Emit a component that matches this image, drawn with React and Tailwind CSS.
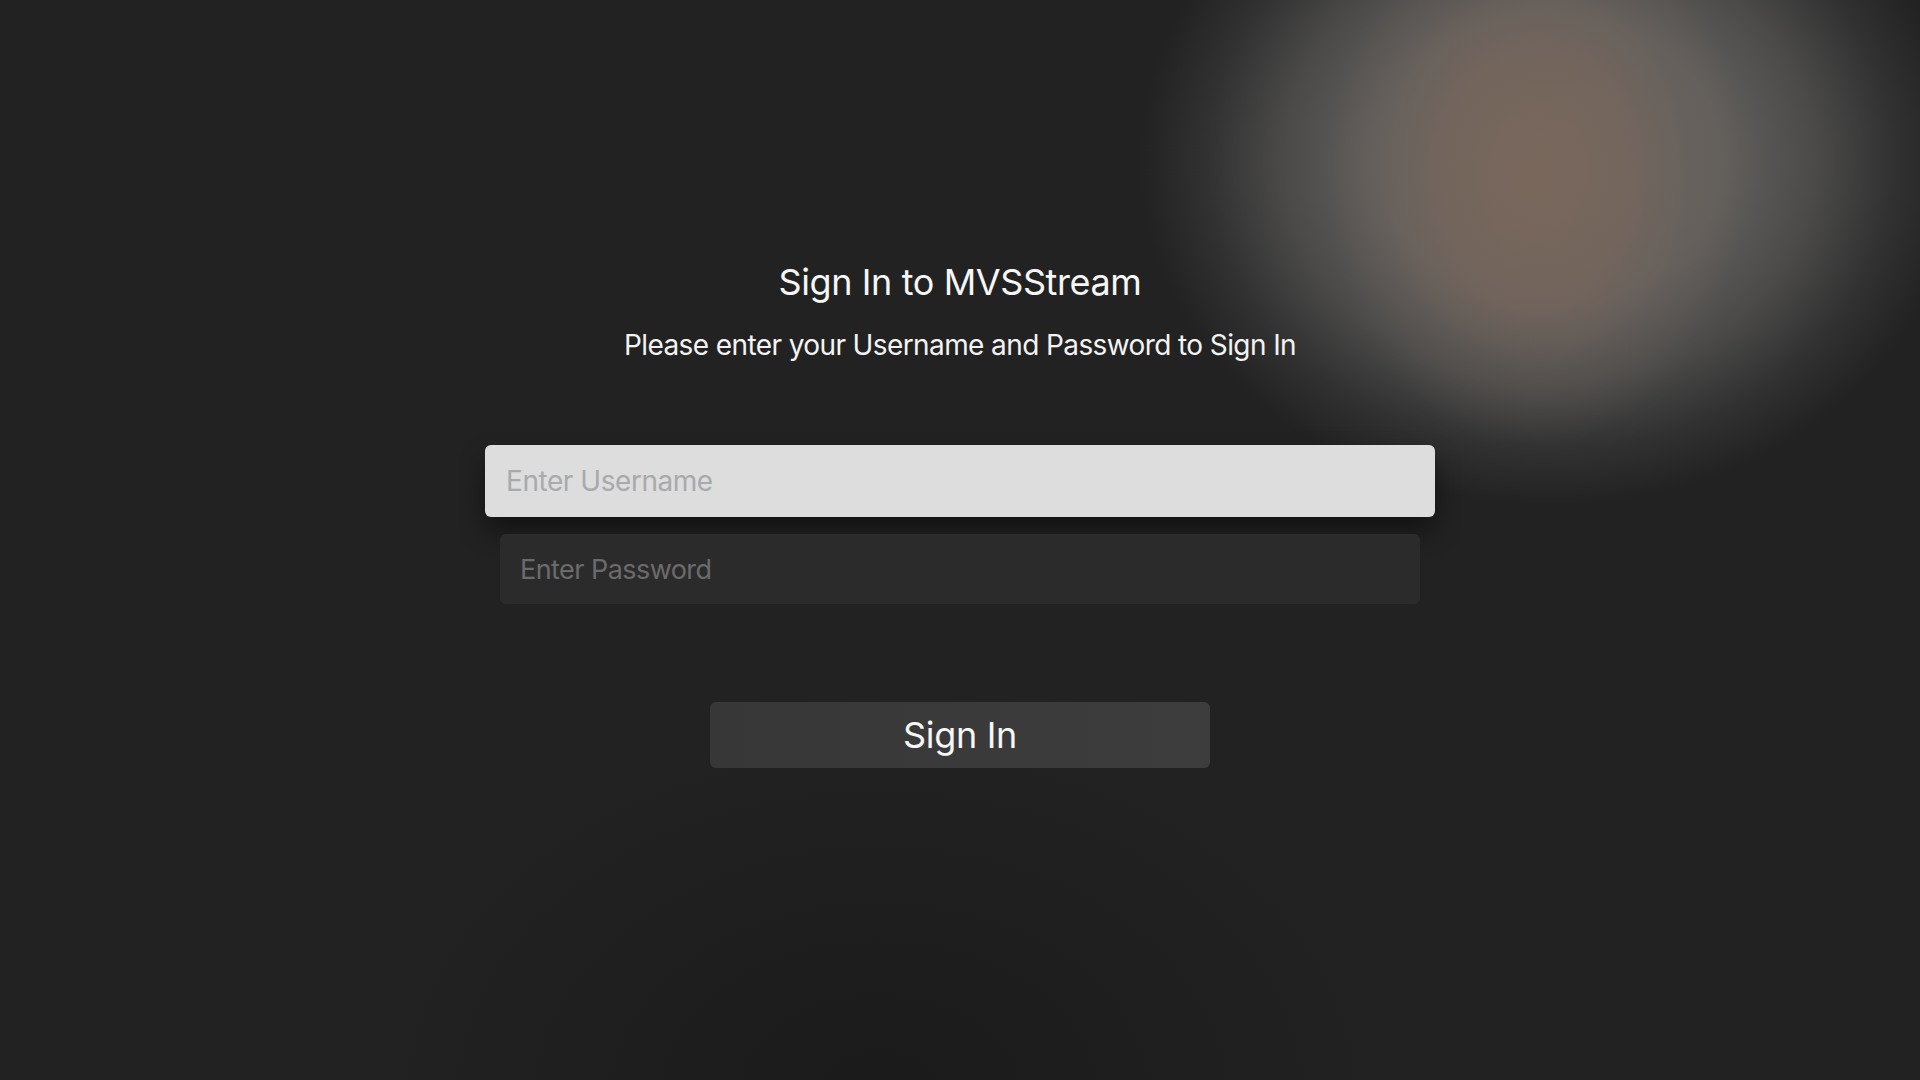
export default function App() {
  return (
    <div className="relative h-[1080px] w-full overflow-hidden bg-[#222222] font-['Inter','Liberation_Sans',sans-serif] antialiased">
      {/* soft blurred backdrop artwork */}
      <div className="pointer-events-none absolute inset-0 bg-[radial-gradient(ellipse_210px_270px_at_1535px_175px,rgba(126,104,90,0.8)_0%,rgba(124,104,92,0.62)_45%,rgba(112,100,94,0.25)_75%,rgba(110,100,95,0)_100%),radial-gradient(ellipse_410px_345px_at_1550px_160px,#686562_0%,#625f5c_42%,#4b4a49_65%,#313131_84%,rgba(34,34,34,0)_100%)]" />
      <div className="pointer-events-none absolute inset-0 bg-[radial-gradient(ellipse_520px_380px_at_880px_1100px,rgba(20,20,20,0.55)_0%,rgba(20,20,20,0)_100%)]" />

      <main className="relative flex flex-col items-center pt-[260px]">
        <h1 className="text-[36px] leading-[44px] font-normal tracking-[-0.4px] text-[#f6f6f6]">
          Sign In to MVSStream
        </h1>
        <p className="mt-[24px] text-[28px] leading-[34px] tracking-[-0.6px] text-[#f3f3f3]">
          Please enter your Username and Password to Sign In
        </p>

        <input
          type="text"
          placeholder="Enter Username"
          className="mt-[83px] h-[72px] w-[950px] rounded-[6px] bg-[#dddddd] pl-[21px] text-[28px] tracking-[-0.45px] text-[#333] shadow-[0_14px_26px_rgba(0,0,0,0.45)] outline-none placeholder:text-[#a9a9ad]"
        />
        <input
          type="password"
          placeholder="Enter Password"
          className="mt-[17px] h-[70px] w-[920px] rounded-[6px] bg-[#2b2b2b] pl-[20px] text-[27px] tracking-[-0.55px] text-[#ddd] outline-none placeholder:text-[#6b6b6b]"
        />

        <button className="mt-[98px] h-[66px] w-[500px] rounded-[6px] bg-gradient-to-r from-[#373737] to-[#3d3d3d] text-[36px] tracking-[-0.3px] text-[#f6f6f6]">
          Sign In
        </button>
      </main>
    </div>
  );
}
